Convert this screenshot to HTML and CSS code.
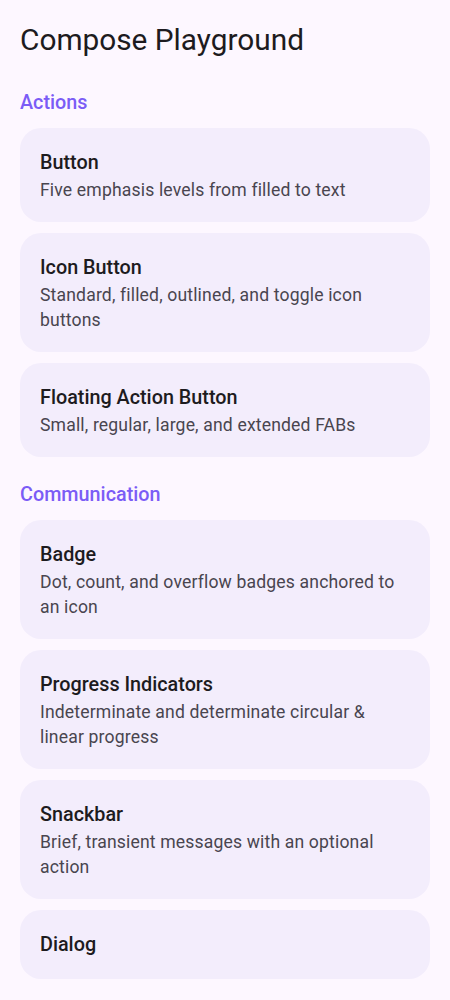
FILE: index.html
```html
<!DOCTYPE html>
<html lang="en">
<head>
  <meta charset="UTF-8">
  <meta name="viewport" content="width=device-width, initial-scale=1.0">
  <title>Compose Playground</title>
  <link rel="stylesheet" href="styles.css">
</head>
<body>
  <div class="screen">
    <h1 class="app-title">Compose Playground</h1>

    <section class="group">
      <h2 class="group-title">Actions</h2>
      <div class="card-list">
        <div class="card">
          <div class="card-title">Button</div>
          <div class="card-text">Five emphasis levels from filled to text</div>
        </div>
        <div class="card">
          <div class="card-title">Icon Button</div>
          <div class="card-text">Standard, filled, outlined, and toggle icon buttons</div>
        </div>
        <div class="card">
          <div class="card-title">Floating Action Button</div>
          <div class="card-text">Small, regular, large, and extended FABs</div>
        </div>
      </div>
    </section>

    <section class="group">
      <h2 class="group-title">Communication</h2>
      <div class="card-list">
        <div class="card">
          <div class="card-title">Badge</div>
          <div class="card-text">Dot, count, and overflow badges anchored to an icon</div>
        </div>
        <div class="card">
          <div class="card-title">Progress Indicators</div>
          <div class="card-text">Indeterminate and determinate circular &amp; linear progress</div>
        </div>
        <div class="card">
          <div class="card-title">Snackbar</div>
          <div class="card-text">Brief, transient messages with an optional action</div>
        </div>
        <div class="card">
          <div class="card-title">Dialog</div>
        </div>
      </div>
    </section>
  </div>
</body>
</html>
```

FILE: styles.css
```css
body, html {
  margin: 0;
  padding: 0;
  background-color: #fdf7ff;
  font-family: Roboto, "Noto Sans", sans-serif;
  color: #1d1b20;
}

.screen {
  padding: 20px 20px 0 20px;
}

.app-title {
  margin: 0 0 5px 0;
  font-size: 29.8px;
  font-weight: 400;
  line-height: 40px;
}

.group-title {
  margin: 0;
  padding: 25px 0 12px 0;
  font-size: 19.8px;
  font-weight: 500;
  line-height: 26px;
  color: #7b5cf6;
}

.card-list {
  display: flex;
  flex-direction: column;
  gap: 11px;
}

.card {
  background-color: #f3edfc;
  border-radius: 21px;
  padding: 20px 20px 19px 20px;
}

.card-title {
  font-size: 19.8px;
  font-weight: 500;
  line-height: 30px;
}

.card-text {
  font-size: 17.6px;
  line-height: 25px;
  letter-spacing: 0.15px;
  color: #49454f;
}
```
